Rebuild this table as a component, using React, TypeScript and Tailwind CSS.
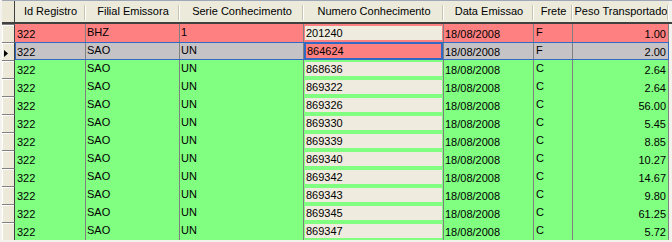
type Row = {
  id: string;
  filial: string;
  serie: string;
  numero: string;
  data: string;
  frete: string;
  peso: string;
  tone: "red" | "sel" | "green";
};

const rows: Row[] = [
  { id: "322", filial: "BHZ", serie: "1", numero: "201240", data: "18/08/2008", frete: "F", peso: "1.00", tone: "red" },
  { id: "322", filial: "SAO", serie: "UN", numero: "864624", data: "18/08/2008", frete: "F", peso: "2.00", tone: "sel" },
  { id: "322", filial: "SAO", serie: "UN", numero: "868636", data: "18/08/2008", frete: "C", peso: "2.64", tone: "green" },
  { id: "322", filial: "SAO", serie: "UN", numero: "869322", data: "18/08/2008", frete: "C", peso: "2.64", tone: "green" },
  { id: "322", filial: "SAO", serie: "UN", numero: "869326", data: "18/08/2008", frete: "C", peso: "56.00", tone: "green" },
  { id: "322", filial: "SAO", serie: "UN", numero: "869330", data: "18/08/2008", frete: "C", peso: "5.45", tone: "green" },
  { id: "322", filial: "SAO", serie: "UN", numero: "869339", data: "18/08/2008", frete: "C", peso: "8.85", tone: "green" },
  { id: "322", filial: "SAO", serie: "UN", numero: "869340", data: "18/08/2008", frete: "C", peso: "10.27", tone: "green" },
  { id: "322", filial: "SAO", serie: "UN", numero: "869342", data: "18/08/2008", frete: "C", peso: "14.67", tone: "green" },
  { id: "322", filial: "SAO", serie: "UN", numero: "869343", data: "18/08/2008", frete: "C", peso: "9.80", tone: "green" },
  { id: "322", filial: "SAO", serie: "UN", numero: "869345", data: "18/08/2008", frete: "C", peso: "61.25", tone: "green" },
  { id: "322", filial: "SAO", serie: "UN", numero: "869347", data: "18/08/2008", frete: "C", peso: "5.72", tone: "green" },
];

const toneBg = {
  red: "bg-[#ff8080]",
  sel: "bg-[#c6c3c6]",
  green: "bg-[#80ff80]",
};

// header captions with widths that match the grid columns below
const headers = [
  { label: "Id Registro", w: "w-[71px]" },
  { label: "Filial Emissora", w: "w-[94px]" },
  { label: "Serie Conhecimento", w: "w-[124px]" },
  { label: "Numero Conhecimento", w: "w-[140px]" },
  { label: "Data Emissao", w: "w-[90px]" },
  { label: "Frete", w: "w-[39px]" },
  { label: "Peso Transportado", w: "w-[96px]" },
];

function Indicator({ current }: { current: boolean }) {
  return (
    <div className="relative h-[18px] w-[13px] shrink-0 border-r border-[#404040] border-t border-t-[#808080] bg-[#ece9d8] shadow-[inset_1px_1px_0_#ffffff]">
      {current ? (
        <svg className="absolute left-[2px] top-[7px]" width="4" height="7" viewBox="0 0 4 7">
          <path d="M0 0 L4 3.5 L0 7 Z" fill="#000" />
        </svg>
      ) : null}
    </div>
  );
}

function GridRow({ row }: { row: Row }) {
  const sel = row.tone === "sel";
  const bg = toneBg[row.tone];
  const cell = "h-full shrink-0 border-r border-[#808080] overflow-hidden whitespace-nowrap";
  return (
    <div className="flex h-[18px]">
      <Indicator current={sel} />
      <div className={`relative flex h-[18px] ${bg}`}>
        {sel ? (
          <div className="pointer-events-none absolute inset-0 border border-[#316ac5] z-10" />
        ) : null}
        <div className={`${cell} w-[71px] pl-[2px] pt-[4px]`}>{row.id}</div>
        <div className={`${cell} w-[94px] pl-[1px] pt-[2px]`}>{row.filial}</div>
        <div className={`${cell} w-[124px] pl-[1px] pt-[2px]`}>{row.serie}</div>
        <div className={`${cell} w-[140px] px-[1px] py-[2px]`}>
          {sel ? (
            <div className="relative z-20 -mx-[1px] -my-[2px] h-[18px] border-2 border-[#316ac5] bg-[#ff8080] pl-[1px] pt-[1px]">
              {row.numero}
            </div>
          ) : (
            <div className="h-[14px] bg-[#efebde] pl-[1px] leading-[14px]">{row.numero}</div>
          )}
        </div>
        <div className={`${cell} w-[90px] pl-[1px] pt-[4px]`}>{row.data}</div>
        <div className={`${cell} w-[39px] pl-[2px] pt-[2px]`}>{row.frete}</div>
        <div className={`${cell} w-[96px] pr-[2px] pt-[4px] text-right`}>{row.peso}</div>
      </div>
    </div>
  );
}

export default function App() {
  return (
    <div
      className="h-[242px] w-[672px] overflow-hidden bg-[#f3f2ec] text-[11px] leading-[13px] text-black"
      style={{ fontFamily: '"Liberation Sans", Arial, sans-serif' }}
    >
      <div className="h-full border-l-2 border-l-[#f3f2ec]">
        {/* header */}
        <div className="flex h-[24px] border-t border-[#a0a8b8] border-b-2 border-b-[#404040]">
          <div className="h-full w-[13px] shrink-0 border-r border-[#404040] bg-[#ece9d8]" />
          {headers.map((h) => (
            <div
              key={h.label}
              className={`relative flex h-full shrink-0 items-center justify-center bg-[#ebeadb] ${h.w} whitespace-nowrap`}
            >
              <span className="-mt-[1px]">{h.label}</span>
              <div className="absolute right-0 top-[4px] h-[15px] w-[2px] border-l border-[#c7c5b2] bg-white" />
            </div>
          ))}
        </div>
        {rows.map((r) => (
          <GridRow key={r.numero} row={r} />
        ))}
      </div>
    </div>
  );
}
